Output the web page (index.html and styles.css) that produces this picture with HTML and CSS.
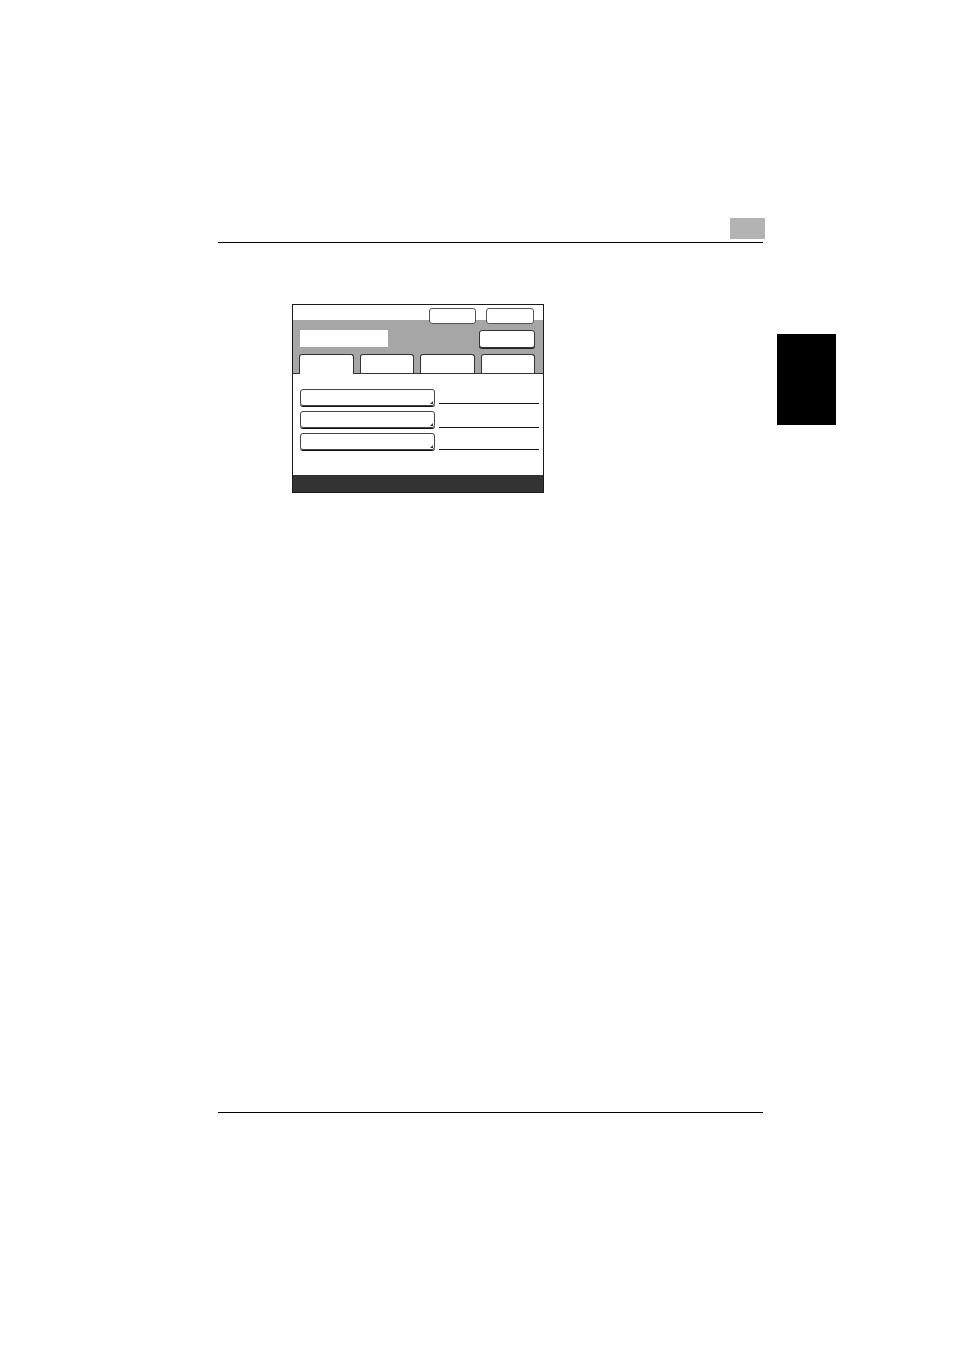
FILE: index.html
```html
<!DOCTYPE html>
<html>
<head>
<meta charset="utf-8">
<link rel="stylesheet" href="styles.css">
</head>
<body>
<div class="page">
  <div class="main">
    <div class="head"><div class="chip"></div></div>
    <div class="screen">
      <div class="top">
        <div class="row1">
          <div class="btn b1"></div>
          <div class="btn b2"></div>
        </div>
        <div class="row2">
          <div class="field"></div>
          <div class="btn b3"></div>
        </div>
        <div class="tabs">
          <div class="tab active"></div>
          <div class="tab"></div>
          <div class="tab"></div>
          <div class="tab"></div>
        </div>
      </div>
      <div class="content">
        <div class="item"><div class="key"></div><div class="rule"></div></div>
        <div class="item"><div class="key"></div><div class="rule"></div></div>
        <div class="item"><div class="key"></div><div class="rule"></div></div>
      </div>
      <div class="bar"></div>
    </div>
    <div class="foot"></div>
  </div>
  <div class="thumb"></div>
</div>
</body>
</html>
```
FILE: styles.css
```css
html, body { margin: 0; padding: 0; background: #fff; font-family: "Liberation Sans", Arial, sans-serif; }
.page { display: flex; align-items: flex-start; padding: 217px 0 0 218px; }
.main { width: 545px; }
.head { height: 25px; border-bottom: 1px solid #000; display: flex; justify-content: flex-end; }
.chip { width: 35px; height: 21px; background: #b3b3b3; margin-top: 1px; margin-right: -2px; }
.screen { margin: 61px 0 0 74px; width: 250px; border: 1px solid #1a1a1a; display: flex; flex-direction: column; }
.top { height: 68px; background: linear-gradient(#fff 0 15px, #a6a6a6 15px); display: flex; flex-direction: column; padding: 0 8px 0 6px; box-sizing: border-box; }
.row1 { display: flex; justify-content: flex-end; gap: 10px; margin-top: 3px; height: 16px; }
.btn { background: #fff; border: 1px solid #555; border-radius: 3px; box-sizing: border-box; }
.b1 { width: 47px; height: 16px; }
.b2 { width: 48px; height: 16px; margin-right: 1px; }
.row2 { display: flex; justify-content: space-between; align-items: flex-start; margin-top: 6px; height: 19px; }
.field { width: 88px; height: 17px; background: #fff; margin-left: 1px; }
.b3 { width: 56px; height: 18px; border-color: #333; box-shadow: 0 1px 0 #222; }
.tabs { display: flex; gap: 6px; margin-top: 6px; height: 19px; align-items: flex-start; position: relative; z-index: 1; }
.tab { width: 55px; height: 19px; background: #fff; border: 1px solid #333; border-bottom: none; border-radius: 3px 3px 0 0; box-sizing: border-box; }
.tab.active { height: 20px; }
.content { border-top: 1px solid #333; height: 102px; box-sizing: border-box; padding: 15px 4px 0 7px; display: flex; flex-direction: column; gap: 4px; }
.item { display: flex; align-items: flex-end; gap: 4px; height: 18px; }
.key { width: 135px; height: 17px; align-self: flex-start; border: 1px solid #444; border-radius: 3px; box-sizing: border-box; box-shadow: 0 1px 0 #111; position: relative; }
.key::after { content: ""; position: absolute; right: 1px; bottom: 1px; width: 0; height: 0; border-left: 3px solid transparent; border-bottom: 3px solid #333; }
.rule { flex: 1; height: 1px; background: #111; margin-bottom: 3px; }
.item + .item .rule { margin-bottom: 1px; }
.bar { height: 17px; background: #333; }
.foot { margin-top: 619px; height: 1px; background: #000; }
.thumb { width: 59px; height: 91px; background: #000; margin: 117px 0 0 14px; }
```
